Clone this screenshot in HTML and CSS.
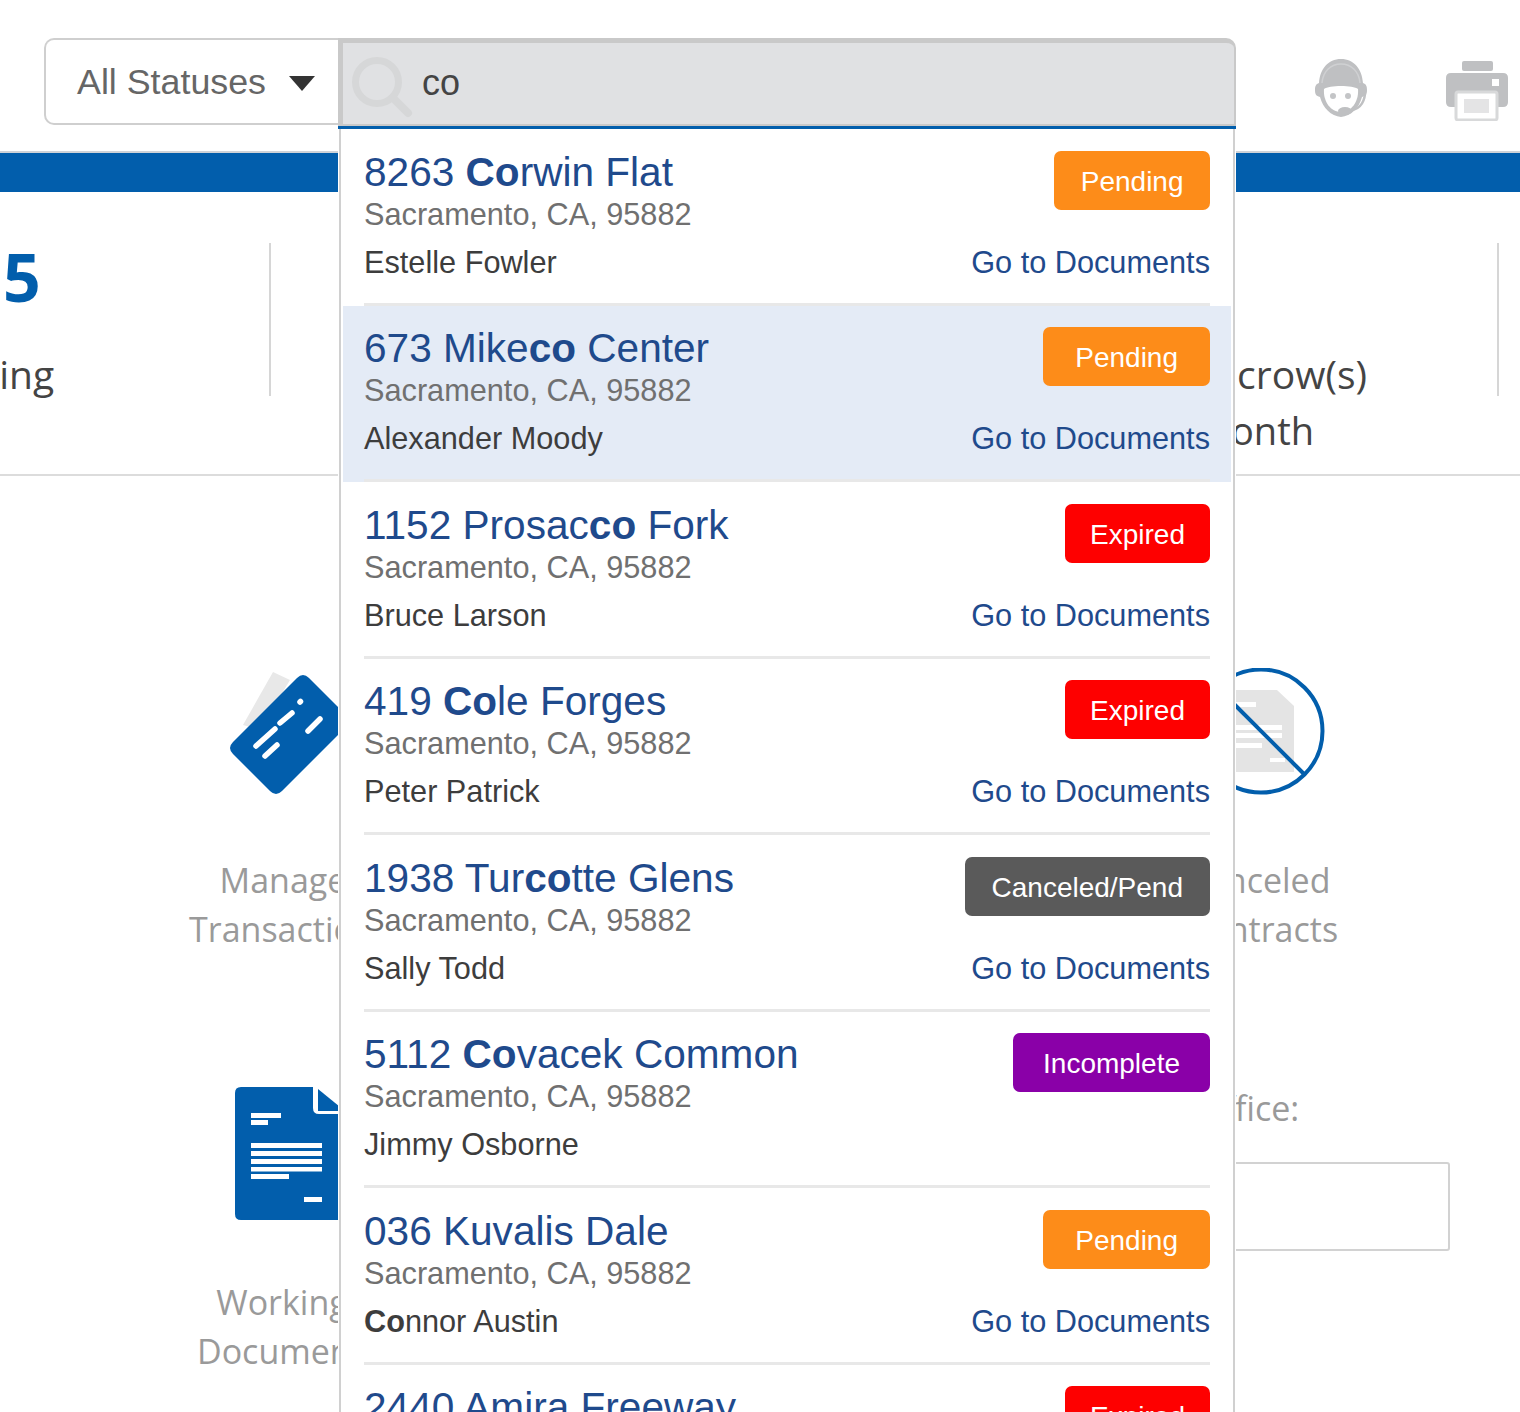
FILE: index.html
```html
<!DOCTYPE html>
<html lang="en">
<head>
<meta charset="utf-8">
<title>Transactions</title>
<link rel="stylesheet" href="styles.css">
</head>
<body>
<div class="page">
  <header class="topbar">
    <div class="status-select">
      <span>All Statuses</span>
      <svg class="caret" viewBox="0 0 26 15"><path d="M0 0H26L13 15Z"/></svg>
    </div>
    <div class="search-wrap">
      <div class="search">
        <svg class="search-icon" viewBox="0 0 62 62"><circle cx="25" cy="25" r="21.5" fill="none" stroke="#d6d7d8" stroke-width="7"/><path d="M41 41L56 56" stroke="#d6d7d8" stroke-width="8" stroke-linecap="round"/></svg>
        <span class="search-text">co</span>
      </div>
    </div>
    <svg class="tool-icon headset" viewBox="0 0 54 60">
      <path d="M27 1C14 1 6 11 5 25C2 26 1 28 1 32C1 36 2 38 6 39C9 50 17 58 27 59C37 58 45 50 48 39C52 38 53 36 53 32C53 28 52 26 49 25C48 11 40 1 27 1Z" fill="#bfc0c2"/>
      <path d="M8 25C9 13 17 6 27 6C37 6 45 13 46 25" fill="none" stroke="#cfd0d2" stroke-width="1.5"/>
      <path d="M10 31C15 27 39 27 44 31C45 44 37 54 27 54C17 54 9 44 10 31Z" fill="#fff"/>
      <circle cx="19" cy="38" r="3" fill="#c4c5c7"/><circle cx="34" cy="38" r="3" fill="#c4c5c7"/>
      <path d="M51 36C50 46 44 52 34 53" fill="none" stroke="#bfc0c2" stroke-width="2.5"/>
      <ellipse cx="31" cy="53" rx="7" ry="4" fill="#bfc0c2"/>
    </svg>
    <svg class="tool-icon printer" viewBox="0 0 64 60">
      <rect x="17" y="0" width="31" height="10" rx="2" fill="#bfc0c2"/>
      <path d="M6 12H58Q63 12 63 17V41Q63 46 58 46H6Q1 46 1 41V17Q1 12 6 12Z" fill="#bfc0c2"/>
      <rect x="47" y="18" width="7" height="7" fill="#fff"/>
      <rect x="11" y="31" width="41" height="28" rx="2" fill="#fff" stroke="#d8d9da" stroke-width="3"/>
      <rect x="19" y="38" width="25" height="14" fill="#e4e4e5"/>
    </svg>
  </header>

  <div class="band"></div>

  <section class="stats">
    <div class="stat stat-first">
      <div class="stat-number">5</div>
      <div class="stat-label stat-label-pending">Pending</div>
    </div>
    <div class="stat-gap"></div>
    <div class="stat stat-last">
      <div class="stat-label stat-line-a"><span class="stat-covered">Es</span>crow(s)</div>
      <div class="stat-label stat-line-b">this Month</div>
    </div>
  </section>

  <main class="tiles">
    <div class="tile-col tile-col-left">
      <div class="tile">
        <svg class="tile-icon tile-icon-a" viewBox="224 668 140 127">
          <path d="M243 725L273 672L290 680L260 730Z" fill="#e8e8e8"/>
          <path d="M233 742L297 678Q303 672 309 678L346 715Q352 721 346 727L282 791Q276 797 270 791L233 754Q227 748 233 742Z" fill="#025eac"/>
          <g stroke="#fff" stroke-width="5.5" stroke-linecap="round" fill="none">
            <path d="M256 746L275 729"/><path d="M280 723L292 713"/><path d="M300 702L300.5 701.5"/><path d="M265 756L277 745"/><path d="M308 731L320 719"/>
          </g>
        </svg>
        <div class="tile-label tile-label-manage"><span class="line line-manage">Manage</span><span class="line">Transactions</span></div>
      </div>
      <div class="tile tile-second">
        <svg class="tile-icon tile-icon-b" viewBox="235 1087 118 133">
          <path d="M241 1087H313V1108Q313 1114 319 1114H353V1214Q353 1220 347 1220H241Q235 1220 235 1214V1093Q235 1087 241 1087Z" fill="#025eac"/>
          <path d="M318 1089L345 1111H318Z" fill="#025eac"/>
          <g fill="#fff">
            <rect x="251" y="1113" width="30" height="5"/><rect x="251" y="1120" width="17" height="5"/>
            <rect x="251" y="1143" width="71" height="5"/><rect x="251" y="1151" width="71" height="5"/><rect x="251" y="1159" width="71" height="5"/><rect x="251" y="1167" width="71" height="4.5"/><rect x="251" y="1174" width="38" height="5"/>
            <rect x="304" y="1197" width="18" height="5"/>
          </g>
        </svg>
        <div class="tile-label tile-label-working"><span class="line line-working">Working</span><span class="line">Documents</span></div>
      </div>
    </div>
    <div class="tile-col tile-col-right">
      <div class="tile">
        <svg class="tile-icon tile-icon-a" viewBox="1192 668 140 127">
          <path d="M1228 690H1277L1294 706V772H1228Z" fill="#e4e4e4"/>
          <g fill="#fff"><rect x="1232" y="702" width="24" height="5"/><rect x="1232" y="725" width="50" height="5"/><rect x="1232" y="733" width="50" height="5"/><rect x="1232" y="743" width="30" height="5"/><rect x="1270" y="758" width="15" height="4"/></g>
          <circle cx="1261" cy="731" r="61.5" fill="none" stroke="#025eac" stroke-width="4"/>
          <path d="M1217 687L1305 775" stroke="#025eac" stroke-width="4"/>
        </svg>
        <div class="tile-label"><span class="line line-canceled">Canceled</span><span class="line">Contracts</span></div>
      </div>
      <div class="office">
        <div class="tile-label office-label">Office:</div>
        <div class="office-input"></div>
      </div>
    </div>
  </main>

  <div class="results">
    <article class="result">
      <div class="result-grid">
        <div><div class="result-title">8263 <b>Co</b>rwin Flat</div><div class="result-addr">Sacramento, CA, 95882</div></div>
        <span class="badge badge-pending badge-narrow">Pending</span>
        <div class="result-person">Estelle Fowler</div>
        <a class="result-link">Go to Documents</a>
      </div>
      <div class="sep"></div>
    </article>
    <article class="result result-active">
      <div class="result-grid">
        <div><div class="result-title">673 Mike<b>co</b> Center</div><div class="result-addr">Sacramento, CA, 95882</div></div>
        <span class="badge badge-pending">Pending</span>
        <div class="result-person">Alexander Moody</div>
        <a class="result-link">Go to Documents</a>
      </div>
      <div class="sep"></div>
    </article>
    <article class="result">
      <div class="result-grid">
        <div><div class="result-title">1152 Prosac<b>co</b> Fork</div><div class="result-addr">Sacramento, CA, 95882</div></div>
        <span class="badge badge-expired">Expired</span>
        <div class="result-person">Bruce Larson</div>
        <a class="result-link">Go to Documents</a>
      </div>
      <div class="sep"></div>
    </article>
    <article class="result">
      <div class="result-grid">
        <div><div class="result-title">419 <b>Co</b>le Forges</div><div class="result-addr">Sacramento, CA, 95882</div></div>
        <span class="badge badge-expired">Expired</span>
        <div class="result-person">Peter Patrick</div>
        <a class="result-link">Go to Documents</a>
      </div>
      <div class="sep"></div>
    </article>
    <article class="result">
      <div class="result-grid">
        <div><div class="result-title">1938 Tur<b>co</b>tte Glens</div><div class="result-addr">Sacramento, CA, 95882</div></div>
        <span class="badge badge-canceled">Canceled/Pend</span>
        <div class="result-person">Sally Todd</div>
        <a class="result-link">Go to Documents</a>
      </div>
      <div class="sep"></div>
    </article>
    <article class="result">
      <div class="result-grid">
        <div><div class="result-title">5112 <b>Co</b>vacek Common</div><div class="result-addr">Sacramento, CA, 95882</div></div>
        <span class="badge badge-incomplete">Incomplete</span>
        <div class="result-person">Jimmy Osborne</div>
      </div>
      <div class="sep"></div>
    </article>
    <article class="result">
      <div class="result-grid">
        <div><div class="result-title">036 Kuvalis Dale</div><div class="result-addr">Sacramento, CA, 95882</div></div>
        <span class="badge badge-pending">Pending</span>
        <div class="result-person"><b>Co</b>nnor Austin</div>
        <a class="result-link">Go to Documents</a>
      </div>
      <div class="sep"></div>
    </article>
    <article class="result">
      <div class="result-grid">
        <div><div class="result-title">2440 Amira Freeway</div><div class="result-addr">Sacramento, CA, 95882</div></div>
        <span class="badge badge-expired">Expired</span>
      </div>
    </article>
  </div>
</div>
</body>
</html>
```

FILE: styles.css
```css
* { box-sizing: border-box; }
html, body { margin: 0; padding: 0; background: #fff; }
body { height: 1412px; overflow: hidden; font-family: "Liberation Sans", Arial, sans-serif; }
.page { position: relative; width: 1520px; height: 1412px; overflow: hidden; }

.topbar { display: flex; align-items: flex-start; height: 151px; padding: 38px 0 0 44px; }
.status-select { display: flex; align-items: center; width: 294px; height: 87px; padding: 2px 0 0 31px; border: 2px solid #cfcfcf; border-right: 0; border-radius: 10px 0 0 10px; font-size: 35.8px; color: #666; }
.caret { width: 26px; height: 15px; margin-left: 23px; margin-top: 2px; fill: #333; }
.search-wrap { width: 898px; height: 92px; border-bottom: 4px solid #025eac; }
.search { display: flex; align-items: center; height: 88px; border: solid #c9c9c9; border-width: 5px 2px 2px 5px; border-radius: 0 10px 0 0; background: #e0e1e3; color: #444; font-size: 36px; }
.search-icon { width: 62px; height: 62px; margin: 8px 0 0 9px; flex: none; }
.search-text { margin: 0 0 2px 8px; }
.tool-icon { flex: none; }
.headset { width: 54px; height: 60px; margin: 20px 0 0 78px; }
.printer { width: 64px; height: 60px; margin: 23px 0 0 77px; }

.band { height: 41px; background: #025eac; border-top: 2px solid #cfd3d8; }

.stats { display: flex; height: 284px; padding: 51px 21px 0 0; border-bottom: 2px solid #dcdcdc; color: #444; font-family: "Open Sans", sans-serif; }
.stat { display: flex; flex-direction: column; height: 153px; border-right: 2px solid #d6d6d6; }
.stat-first { width: 271px; }
.stat-gap { flex: 1; }
.stat-last { width: 263px; padding-top: 103px; align-items: flex-end; }
.stat-number { margin-left: 3px; font-size: 66px; font-weight: 700; line-height: 66px; color: #025eac; }
.stat-label { font-size: 38px; line-height: 56px; white-space: nowrap; }
.stat-label-pending { margin: 37px 0 0 -94px; font-size: 39px; }
.stat-line-a { margin-right: 130px; font-size: 39px; }
.stat-covered { margin-right: 4px; }
.stat-line-b { margin-right: 183px; }

.tiles { display: flex; justify-content: space-between; padding-top: 192px; font-family: "Open Sans", sans-serif; }
.tile-col { display: flex; flex-direction: column; align-items: center; }
.tile-col-left { width: 588px; }
.tile-col-right { width: 516px; }
.tile { display: flex; flex-direction: column; align-items: center; }
.tile-second { margin-top: 133px; }
.tile-icon { flex: none; }
.tile-icon-a { width: 140px; height: 127px; }
.tile-icon-b { width: 118px; height: 133px; }
.tile-label { margin-top: 61px; font-size: 34px; line-height: 49px; color: #9a9a9a; text-align: center; white-space: nowrap; }
.line { display: block; }
.tile-label-manage { margin-right: 8px; }
.line-manage { margin-right: 14px; }
.tile-label-working { margin-top: 58px; margin-right: 12px; }
.line-working { margin-right: 12px; }
.line-canceled { margin-right: 8px; }
.office { align-self: stretch; margin: 130px 70px 0 193px; }
.office-label { margin: 0 0 29px; text-align: left; }
.office-input { height: 89px; margin-left: 2px; border: 2px solid #d2d2d2; border-radius: 3px; }

.results { position: absolute; top: 129px; left: 339px; width: 896px; height: 1283px; padding: 0 2px; border: solid #d0d0d0; border-width: 0 2px; background: #fff; box-shadow: -1px 0 0 #fff, 1px 0 0 #fff; }
.result { display: flex; flex-direction: column; height: 176.5px; padding: 20.6px 21px 0; }
.result-active { background: #e4ebf6; }
.result-grid { display: grid; grid-template-columns: 1fr auto; align-items: start; }
.result-title { font-size: 40.6px; line-height: 45px; color: #1f4a8c; white-space: nowrap; }
.result-addr { font-size: 30.7px; line-height: 40px; color: #707070; white-space: nowrap; }
.result-person { margin-top: 8.4px; font-size: 30.7px; line-height: 40px; color: #3d3d3d; white-space: nowrap; }
.result-link { margin-top: 8.4px; font-size: 30.7px; line-height: 40px; color: #1f4a8c; white-space: nowrap; justify-self: end; }
.badge { justify-self: end; margin-top: 1px; padding: 0 27px; height: 59px; border-radius: 7px; color: #fff; font-size: 28px; line-height: 62px; white-space: nowrap; }
.badge-pending { background: #fd8c19; padding: 0 32px; }
.badge-narrow { padding: 0 26.5px; }
.badge-expired { background: #fe0000; padding: 0 25px; }
.badge-canceled { background: #5a5a5a; }
.badge-incomplete { background: #8a00a8; padding: 0 30px; }
.sep { flex: none; height: 3px; margin-top: auto; background: #e8e8e8; }
```
